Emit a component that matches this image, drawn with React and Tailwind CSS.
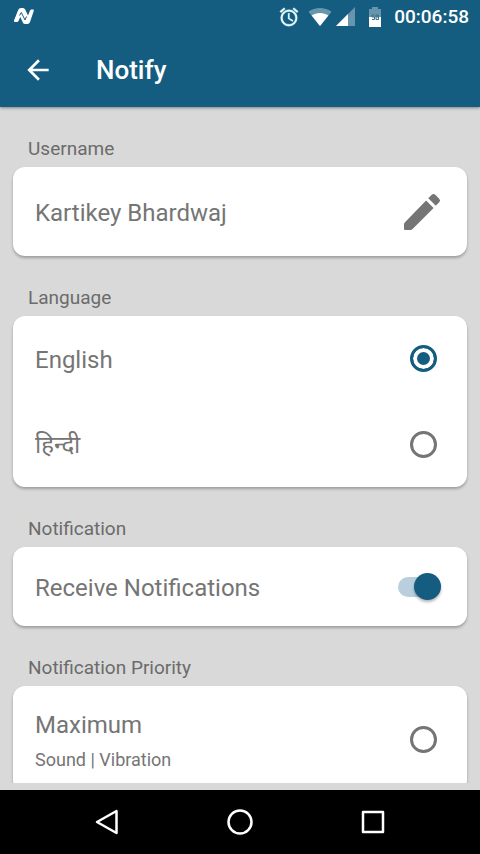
import React from "react";

function AppLogo() {
  return (
    <svg width="22" height="18" viewBox="0 0 22 18" aria-hidden="true">
      <path d="M1 13.500 5.200 3Q6 1 8 1h2q1.500 0 2.200 1.500L15 8.500l2-5Q17.500 2.500 18.500 2.500h1.500q1.200 0 .8 1.200L17 15q-.7 2-2.500 2h-2.500q-1.500 0-2.200-1.500L7.300 10 5.500 14Q5 15 4 15H2Q.6 15 1 13.500z" fill="#fff" />
      <path d="M6.500 8.500 8.300 5.500 12 13l1.500-3.500" fill="none" stroke="#155d80" strokeWidth="1" />
    </svg>
  );
}

function AlarmIcon() {
  return (
    <svg width="22" height="22" viewBox="0 0 24 24" fill="#e6fbff" stroke="#e6fbff" strokeWidth="0.4" aria-hidden="true">
      <path d="M22 5.72l-4.6-3.86-1.29 1.53 4.6 3.86L22 5.72zM7.88 3.39L6.6 1.86 2 5.71l1.29 1.53 4.59-3.85zM12.5 8H11v6l4.75 2.85.75-1.23-4-2.37V8zM12 4c-4.97 0-9 4.03-9 9s4.02 9 9 9a9 9 0 0 0 0-18zm0 16c-3.87 0-7-3.13-7-7s3.13-7 7-7 7 3.13 7 7-3.13 7-7 7z" />
    </svg>
  );
}

function WifiIcon() {
  return (
    <svg width="24" height="20" viewBox="0 0 24 20" aria-hidden="true">
      <path d="M12 19 .5 4.7C7 -.2 17 -.2 23.5 4.7z" fill="#fff" opacity=".35" />
      <path d="M12 19 3.6 8.6C8 5 16 5 20.4 8.6z" fill="#fff" />
    </svg>
  );
}

function SignalIcon() {
  return (
    <svg width="20" height="20" viewBox="0 0 20 20" aria-hidden="true">
      <path d="M0 19 19 0V19z" fill="#fff" opacity=".35" />
      <path d="M0 19 12 7V19z" fill="#fff" />
    </svg>
  );
}

function BatteryIcon() {
  return (
    <svg width="14" height="20" viewBox="0 0 14 20" aria-hidden="true">
      <path d="M4 0h6v2h3v8H1V2h3z" fill="#fff" opacity=".35" />
      <path d="M1 10h12v10H1z" fill="#fff" />
      <path d="M6.500 8H4v2h2.500v2.500H4M8 8h2.500v4.500H8zM8 10h2.500" fill="none" stroke="#3f6f8a" strokeWidth="1" />
    </svg>
  );
}

function Section({ title, children }) {
  return (
    <section>
      <h2 className="px-7 pt-[30px] pb-[6px] text-[19px] leading-6 text-[#6b6b6b]">{title}</h2>
      <div className="mx-[13px] rounded-xl bg-white shadow-[0_2px_3px_rgba(0,0,0,0.28)]">{children}</div>
    </section>
  );
}

const radioClass =
  "size-[27px] shrink-0 appearance-none rounded-full border-3 border-[#757575] checked:border-[#155d80] checked:bg-[#155d80] checked:shadow-[inset_0_0_0_4px_white]";

function RadioRow({ id, name, label, detail, defaultChecked }) {
  return (
    <div className="flex h-full items-center justify-between pr-[30px] pl-[22px]">
      <label htmlFor={id} className={detail ? "flex-1 pt-[5px]" : "flex-1 pt-0.5"}>
        <span className="block text-2xl">{label}</span>
        {detail && <span className="mt-[5px] block text-lg leading-7">{detail}</span>}
      </label>
      <input id={id} type="radio" name={name} defaultChecked={defaultChecked} className={radioClass} />
    </div>
  );
}

export default function App() {
  return (
    <div className="flex h-dvh flex-col overflow-hidden bg-[#d9d9d9] font-[Roboto,'Noto_Sans',sans-serif] text-[#757575]">
      <header className="relative z-10 bg-[#155d80] text-white shadow-[0_1px_3px_rgba(0,0,0,0.4)]">
        <div className="flex h-8 items-center pr-[11px] pl-[13px]">
          <AppLogo />
          <div className="ml-auto flex items-center pt-0.5">
            <AlarmIcon />
            <span className="ml-2 flex"><WifiIcon /></span>
            <span className="ml-1 flex"><SignalIcon /></span>
            <span className="ml-3 flex"><BatteryIcon /></span>
            <time className="ml-3 text-[19px] font-medium">00:06:58</time>
          </div>
        </div>
        <div className="flex h-[75px] items-center gap-[42px] pl-[22px]">
          <button type="button" aria-label="Back" className="size-8">
            <svg viewBox="0 0 24 24" fill="currentColor" className="size-8">
              <path d="M20 11H7.830l5.590-5.590L12 4l-8 8 8 8 1.410-1.410L7.830 13H20v-2z" />
            </svg>
          </button>
          <h1 className="pt-0.5 text-[26px] font-medium">Notify</h1>
        </div>
      </header>

      <main className="min-h-0 flex-1 overflow-y-auto [scrollbar-width:none]">
        <Section title="Username">
          <div className="flex h-[89px] items-center justify-between pr-[21px] pl-[22px]">
            <span className="pt-0.5 text-2xl">Kartikey Bhardwaj</span>
            <button type="button" aria-label="Edit username" className="size-12">
              <svg viewBox="0 0 24 24" fill="currentColor" className="size-12">
                <path d="M3.600 17 14.060 6.190l3.750 3.750L7.300 20.500Q6.800 21 6.200 21H3.500Q3 21 3 20.500V18.200Q3 17.600 3.600 17zM20.600 7.150a1.300 1.300 0 0 0 0-1.800l-1.950-1.950a1.300 1.300 0 0 0-1.800 0l-1.720 1.720 3.750 3.750z" />
              </svg>
            </button>
          </div>
        </Section>

        <Section title="Language">
          <div className="grid h-[171px] grid-rows-2">
            <RadioRow id="lang-en" name="language" label="English" defaultChecked />
            <RadioRow id="lang-hi" name="language" label="हिन्दी" />
          </div>
        </Section>

        <Section title="Notification">
          <div className="flex h-[79px] items-center justify-between pr-[26px] pl-[22px]">
            <label htmlFor="receive" className="pt-0.5 text-2xl">Receive Notifications</label>
            <input
              id="receive"
              type="checkbox"
              role="switch"
              defaultChecked
              className="flex h-5 w-[43px] appearance-none items-center rounded-full bg-[#c4c4c4] before:size-[27px] before:shrink-0 before:rounded-full before:bg-[#f5f5f5] before:shadow-[0_2px_3px_rgba(0,0,0,0.3)] checked:justify-end checked:bg-[#b9cfdd] checked:before:bg-[#155d80]"
            />
          </div>
        </Section>

        <Section title="Notification Priority">
          <div className="h-[106px]">
            <RadioRow id="prio-max" name="priority" label="Maximum" detail="Sound | Vibration" />
          </div>
        </Section>
      </main>

      <nav className="mt-[7px] flex h-16 shrink-0 justify-center bg-black text-white">
        <button type="button" aria-label="Back" className="flex w-[133px] items-center justify-center">
          <svg width="28" height="28" viewBox="0 0 28 28" fill="none" stroke="currentColor" strokeWidth="2.500" strokeLinejoin="round">
            <path d="M23.500 3v22L4 14z" />
          </svg>
        </button>
        <button type="button" aria-label="Home" className="flex w-[133px] items-center justify-center">
          <svg width="28" height="28" viewBox="0 0 28 28" fill="none" stroke="currentColor" strokeWidth="2.500">
            <circle cx="14" cy="14" r="11.500" />
          </svg>
        </button>
        <button type="button" aria-label="Recent apps" className="flex w-[133px] items-center justify-center">
          <svg width="28" height="28" viewBox="0 0 28 28" fill="none" stroke="currentColor" strokeWidth="2.500" strokeLinejoin="round">
            <rect x="4" y="4" width="20" height="20" />
          </svg>
        </button>
      </nav>
    </div>
  );
}
